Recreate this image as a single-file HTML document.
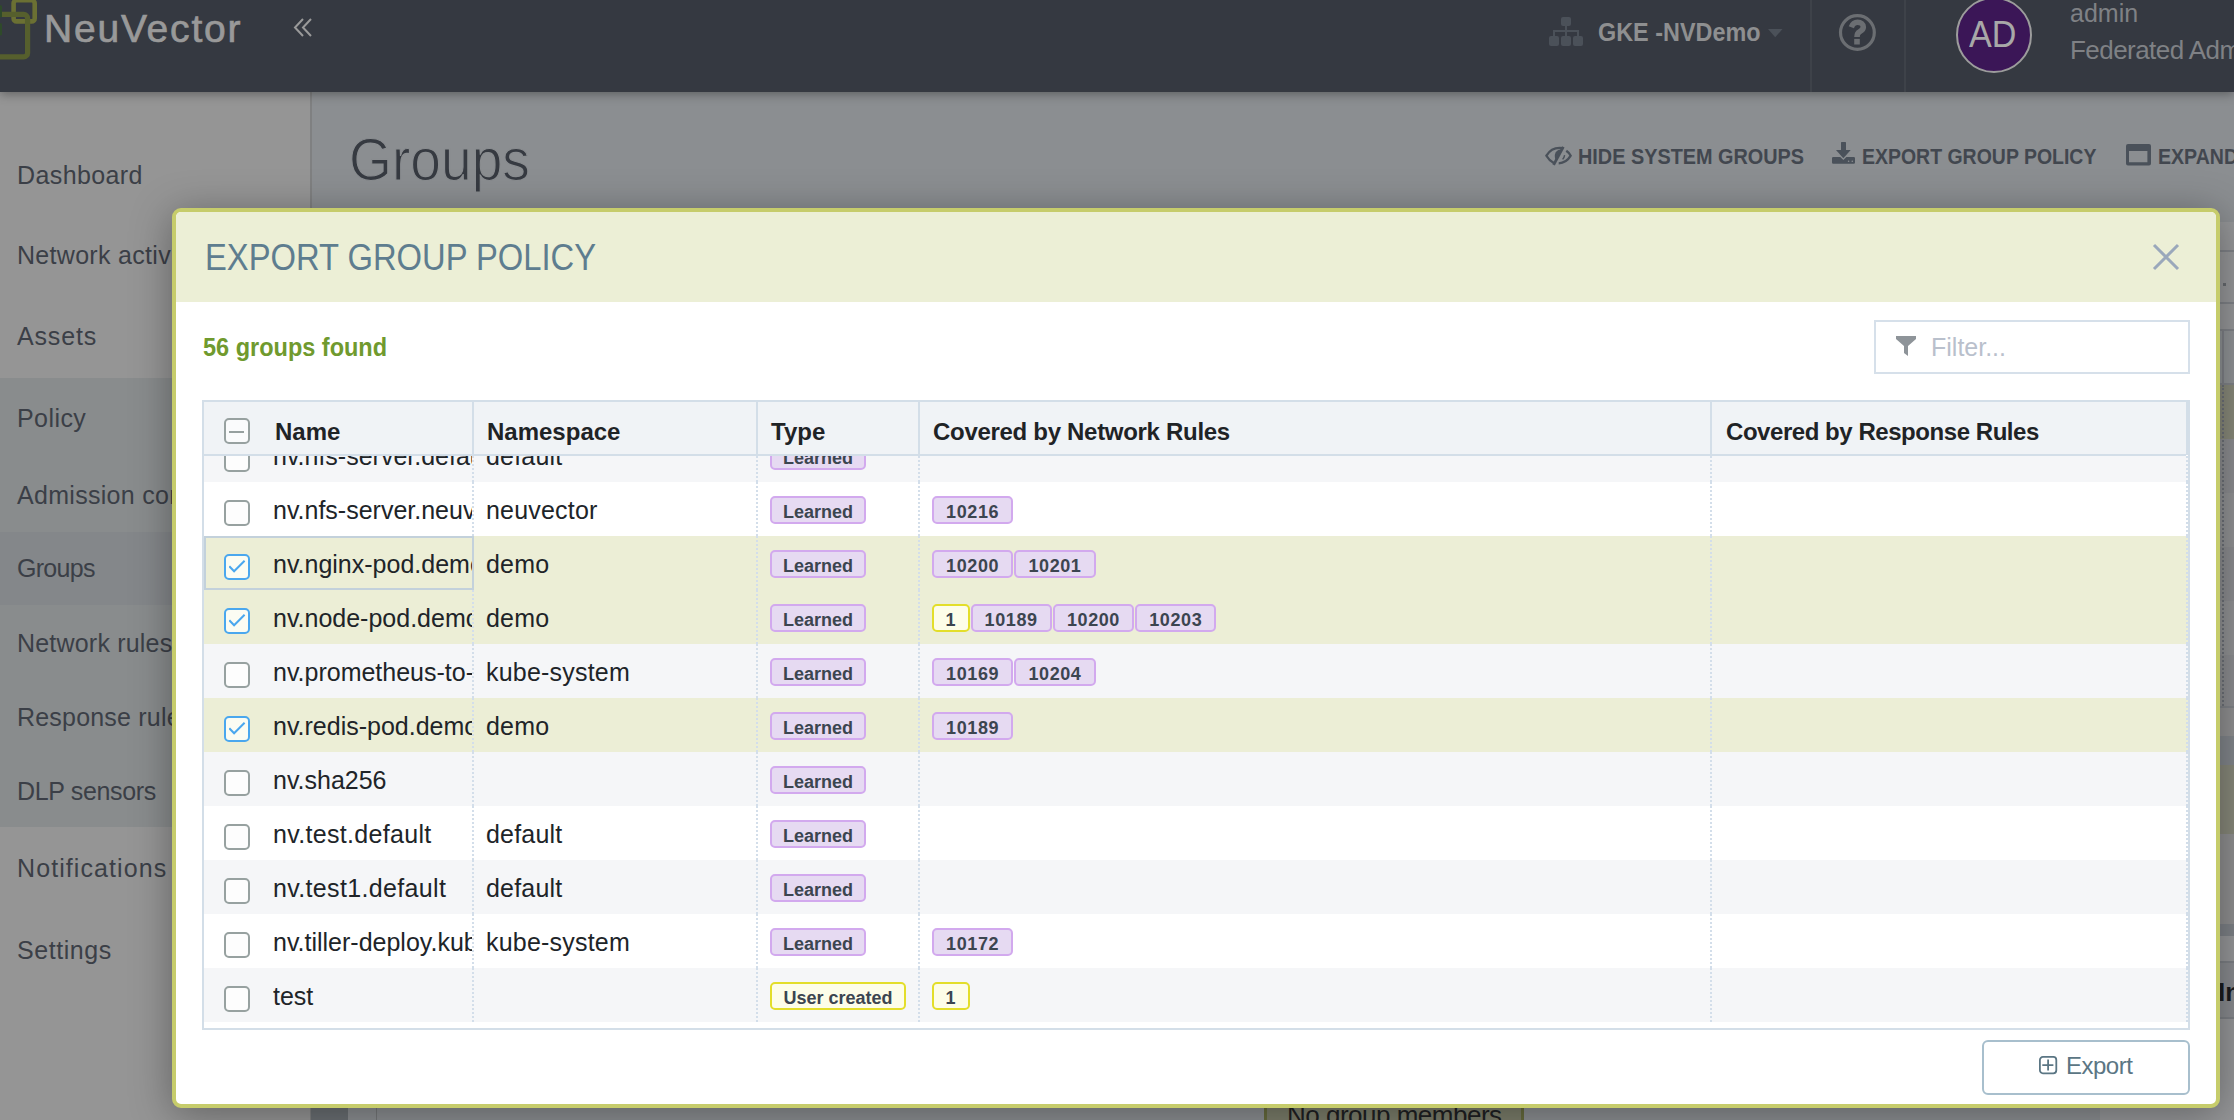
<!DOCTYPE html>
<html><head><meta charset="utf-8">
<style>
*{box-sizing:border-box;margin:0;padding:0}
html,body{width:2234px;height:1120px;overflow:hidden;background:#8b8e91}
body{font-family:"Liberation Sans",sans-serif;position:relative}
.abs{position:absolute}
#hdr{left:0;top:0;width:2234px;height:92px;background:#353941;z-index:5;box-shadow:0 2px 10px rgba(0,0,0,0.35)}
#side{left:0;top:92px;width:310px;height:1028px;background:#959595}
#sideline{left:310px;top:92px;width:2px;height:1028px;background:#7f8081}
#content{left:312px;top:92px;width:1922px;height:1028px;background:#8b8e91}
.nav{position:absolute;left:17px;font-size:25px;color:#3b3f47;letter-spacing:0.45px;white-space:nowrap;line-height:29px}
#modal{left:172px;top:208px;width:2048px;height:900px;border:4px solid #c6cc6b;border-radius:9px;background:#fff;overflow:hidden;box-shadow:0 6px 40px rgba(0,0,0,0.35)}
#mhead{left:0;top:0;width:2040px;height:90px;background:#ecefd6}
.t{position:absolute;white-space:nowrap}
.th{position:absolute;top:3px;height:53px;font-weight:bold;font-size:24px;color:#1f2326;line-height:53px}
.row{position:absolute;left:0;width:1984px;height:54px}
.cell{position:absolute;top:1px;height:53px;line-height:54px;font-size:25px;color:#202428;white-space:nowrap;overflow:hidden;letter-spacing:0.2px}
.cb{position:absolute;left:20px;width:25.6px;height:25.6px;border:2px solid #97a1a0;border-radius:5px;background:#fdfdfd}
.cb.on{border-color:#4aa7ee;background:#fbfcf3}
.tag{position:absolute;height:28px;border:2px solid #d2a9ee;background:#e6daf2;border-radius:5px;font-weight:bold;font-size:18px;color:#3c4550;line-height:29px;text-align:center}
.tag.y{border-color:#e3de2a;background:#fdfde8}
.vd{position:absolute;top:0;width:0;height:54px;border-left:2px dotted #d3deea}
</style></head><body>

<!-- header -->
<div id="hdr" class="abs">
  <svg class="abs" style="left:0;top:0" width="45" height="62" viewBox="0 0 45 62">
    <rect x="13.6" y="0.3" width="21.1" height="21.1" rx="3" fill="none" stroke="#6b7033" stroke-width="4.6"/>
    <rect x="-20" y="14.4" width="47.6" height="42.5" rx="4" fill="none" stroke="#565f2d" stroke-width="5.2"/>
    <rect x="-1" y="5.2" width="3" height="12.2" rx="1.2" fill="#2f4a2a"/>
    <rect x="-1" y="23.2" width="3" height="12.2" rx="1.2" fill="#2f4a2a"/>
  </svg>
  <div class="t" style="left:44px;top:7px;font-size:39px;color:#999999;-webkit-text-stroke:0.7px #999999;letter-spacing:1.8px">NeuVector</div>
  <svg class="abs" style="left:293px;top:18px" width="20" height="20" viewBox="0 0 20 20"><path d="M10 1L2 9.5L10 18M18 1L10 9.5L18 18" fill="none" stroke="#9a9a9a" stroke-width="2"/></svg>

  <svg class="abs" style="left:1549px;top:17px" width="34" height="30" viewBox="0 0 34 30">
    <rect x="12" y="0" width="10" height="9" rx="2" fill="#4b5159"/>
    <rect x="0" y="19" width="10" height="10" rx="2" fill="#4b5159"/>
    <rect x="12" y="19" width="10" height="10" rx="2" fill="#4b5159"/>
    <rect x="24" y="19" width="10" height="10" rx="2" fill="#4b5159"/>
    <rect x="16" y="8" width="2" height="11" fill="#4b5159"/>
    <rect x="4" y="13" width="26" height="2" fill="#4b5159"/>
    <rect x="4" y="13" width="2" height="6" fill="#4b5159"/>
    <rect x="28" y="13" width="2" height="6" fill="#4b5159"/>
  </svg>
  <div class="t" style="left:1598px;top:17px;font-size:26px;font-weight:bold;color:#8e8f90;transform:scaleX(0.9);transform-origin:0 0">GKE -NVDemo</div>
  <svg class="abs" style="left:1768px;top:29px" width="15" height="9"><path d="M0 0H14.5L7.25 8.3Z" fill="#4b5159"/></svg>
  <div class="abs" style="left:1810px;top:0;width:2px;height:92px;background:#3e4249"></div>
  <div class="abs" style="left:1904px;top:0;width:2px;height:92px;background:#3e4249"></div>
  <svg class="abs" style="left:1838px;top:13px" width="39" height="39" viewBox="0 0 39 39">
  <circle cx="19.4" cy="19.5" r="16.9" fill="none" stroke="#6b6e72" stroke-width="3.2"/>
  <path d="M13.3 14.2C14.6 10.8 16.8 9.3 19.6 9.3C22.9 9.3 25.3 11.3 25.3 14C25.3 16.3 23.8 17.5 21.8 18.6C19.9 19.6 19 20.6 19 23.9" fill="none" stroke="#6b6e72" stroke-width="5.6"/>
  <rect x="16.2" y="25.9" width="5.6" height="5.6" fill="#6b6e72"/>
</svg>
  <div class="abs" style="left:1956px;top:-3px;width:76px;height:76px;border-radius:50%;background:#3b1657;border:2px solid #9c9c9c"></div>
  <div class="t" style="left:1969px;top:14px;font-size:37px;color:#a8a8a8;transform:scaleX(0.922);transform-origin:0 0">AD</div>
  <div class="t" style="left:2070px;top:-1px;font-size:25px;color:#7f8185">admin</div>
  <div class="t" style="left:2070px;top:35px;font-size:26px;color:#7f8185;letter-spacing:-0.55px">Federated Admin</div>
</div>

<!-- sidebar -->
<div id="side" class="abs">
  <div class="abs" style="left:0;top:286px;width:310px;height:449px;background:#898c8d"></div>
  <div class="abs" style="left:0;top:440px;width:310px;height:73px;background:#84878a"></div>
</div>
<div class="nav" style="top:161px;letter-spacing:0.4px">Dashboard</div>
<div class="nav" style="top:241px;letter-spacing:0.3px">Network activity</div>
<div class="nav" style="top:322px;letter-spacing:0.85px">Assets</div>
<div class="nav" style="top:404px;letter-spacing:0.43px">Policy</div>
<div class="nav" style="top:481px;letter-spacing:0.3px">Admission control</div>
<div class="nav" style="top:554px;letter-spacing:-0.72px">Groups</div>
<div class="nav" style="top:629px;letter-spacing:0.2px">Network rules</div>
<div class="nav" style="top:703px;letter-spacing:0.2px">Response rules</div>
<div class="nav" style="top:777px;letter-spacing:-0.35px">DLP sensors</div>
<div class="nav" style="top:854px;letter-spacing:1.09px">Notifications</div>
<div class="nav" style="top:936px;letter-spacing:0.55px">Settings</div>
<div id="sideline" class="abs"></div>

<!-- content -->
<div class="t" style="left:349px;top:126px;font-size:59px;color:#363a41;-webkit-text-stroke:1.2px #8a8d90;transform:scaleX(0.935);transform-origin:0 0">Groups</div>
<svg class="abs" style="left:1545px;top:146px" width="27" height="20" viewBox="0 0 27 20">
  <path d="M17.5 2.1C10.5 1.2 4.5 4.5 1.4 9.7C3.3 13 5.8 15.4 8.8 17" fill="none" stroke="#4a515a" stroke-width="2.3"/>
  <path d="M18.3 0.9L8.6 18.9" stroke="#4a515a" stroke-width="2.8"/>
  <path d="M16.8 3.2C12.3 3.2 9.8 6.5 9.8 9.8C9.8 11.8 10.3 13.4 11 14.6Z" fill="#4a515a"/>
  <path d="M21.3 4.8C23.3 6.2 24.8 7.9 25.7 9.7C23 14.2 18.5 17.2 13.7 17.4" fill="none" stroke="#4a515a" stroke-width="2.3"/>
  <path d="M19.6 9.1C19.4 10.7 18.7 12.2 17.6 13.4" fill="none" stroke="#4a515a" stroke-width="1.4"/>
</svg>
<div class="t" style="left:1578px;top:144px;font-size:22px;font-weight:bold;color:#42474f;transform:scaleX(0.902);transform-origin:0 0">HIDE SYSTEM GROUPS</div>
<svg class="abs" style="left:1832px;top:142px" width="23" height="22" viewBox="0 0 23 22">
  <rect x="9" y="0" width="5" height="8.5" rx="0.6" fill="#4a515a"/>
  <path d="M4 8H18.7L11.35 16.2Z" fill="#4a515a"/>
  <path d="M0 16.2Q0 15 1.2 15H8.3L11.35 18.1L14.4 15H21.8Q23 15 23 16.2V20.6Q23 21.8 21.8 21.8H1.2Q0 21.8 0 20.6Z" fill="#4a515a"/>
  <circle cx="16.6" cy="19.2" r="0.8" fill="#8c8f92"/><circle cx="20.3" cy="19.2" r="0.8" fill="#8c8f92"/>
</svg>
<div class="t" style="left:1862px;top:144px;font-size:22px;font-weight:bold;color:#42474f;transform:scaleX(0.885);transform-origin:0 0">EXPORT GROUP POLICY</div>
<svg class="abs" style="left:2126px;top:144px" width="25" height="22" viewBox="0 0 25 22">
  <path d="M2 0H23Q25 0 25 2V19.6Q25 21.6 23 21.6H2Q0 21.6 0 19.6V2Q0 0 2 0ZM3 7V18.2H21.4V7Z" fill="#4a515a" fill-rule="evenodd"/>
</svg>
<div class="t" style="left:2158px;top:144px;font-size:22px;font-weight:bold;color:#42474f;transform:scaleX(0.89);transform-origin:0 0">EXPAND</div>


<!-- background page pieces (visible around modal) -->
<div class="abs" style="left:2100px;top:222px;width:134px;height:898px;background:#959698"></div>
<div class="abs" style="left:2100px;top:250px;width:134px;height:2px;background:#7f8287"></div>
<div class="abs" style="left:2223px;top:283px;width:3px;height:3px;background:#676a6f"></div>
<div class="abs" style="left:2100px;top:302px;width:134px;height:2px;background:#7f8287"></div>
<div class="abs" style="left:2100px;top:329px;width:134px;height:2px;background:#7f8287"></div>
<div class="abs" style="left:2100px;top:331px;width:134px;height:54px;background:#8f9295"></div>
<div class="abs" style="left:2222px;top:331px;width:2px;height:54px;background:#7e8186"></div>
<div class="abs" style="left:2100px;top:383px;width:134px;height:2px;background:#7f8287"></div>
<div class="abs" style="left:2100px;top:385px;width:134px;height:54px;background:#878879"></div>
<div class="abs" style="left:2100px;top:439px;width:134px;height:54px;background:#8b8c8f"></div>
<div class="abs" style="left:2100px;top:493px;width:134px;height:54px;background:#909193"></div>
<div class="abs" style="left:2100px;top:547px;width:134px;height:54px;background:#8b8c8f"></div>
<div class="abs" style="left:2100px;top:601px;width:134px;height:54px;background:#909193"></div>
<div class="abs" style="left:2100px;top:655px;width:134px;height:51px;background:#8b8c8f"></div>
<div class="abs" style="left:2222px;top:385px;width:0;height:321px;border-left:2px dotted #6c7077"></div>
<div class="abs" style="left:2100px;top:706px;width:134px;height:2px;background:#7f8287"></div>
<div class="abs" style="left:2100px;top:708px;width:134px;height:28px;background:#8f8f90"></div>
<div class="abs" style="left:2100px;top:736px;width:134px;height:29px;background:#81858a"></div>
<div class="abs" style="left:2100px;top:765px;width:134px;height:69px;background:#868779"></div>
<div class="abs" style="left:2100px;top:834px;width:134px;height:90px;background:#8e8e8f"></div>
<div class="abs" style="left:2100px;top:924px;width:134px;height:12px;background:#7d8186"></div>
<div class="abs" style="left:2100px;top:961px;width:134px;height:2px;background:#7c7f84"></div>
<div class="abs" style="left:2100px;top:963px;width:134px;height:54px;background:#888a8e"></div>
<div class="abs" style="left:2100px;top:1017px;width:134px;height:2px;background:#7c7f84"></div>
<div class="t" style="left:2218px;top:977px;font-size:26px;font-weight:bold;color:#1a1c1f">In</div>
<div class="abs" style="left:311px;top:1060px;width:37px;height:60px;background:#6a6f73"></div>
<div class="abs" style="left:376px;top:1060px;width:1px;height:60px;background:#757779"></div>
<div class="abs" style="left:1264px;top:1090px;width:260px;height:40px;background:#7b7d6a;border:3px solid #676b3d"></div>
<div class="t" style="left:1287px;top:1100px;font-size:26px;color:#1e2022;letter-spacing:-0.5px">No group members</div>
<!-- modal -->
<div id="modal" class="abs">
  <div id="mhead" class="abs"></div>
  <div class="t" style="left:28.5px;top:25px;font-size:36px;color:#5e7d8f;transform:scaleX(0.909);transform-origin:0 0">EXPORT GROUP POLICY</div>
  <svg class="abs" style="left:1976px;top:31px" width="28" height="28" viewBox="0 0 28 28">
    <path d="M2 2L26 26M26 2L2 26" stroke="#9aa8bb" stroke-width="3"/>
  </svg>
  <div class="t" style="left:27px;top:121px;font-size:25px;font-weight:bold;color:#709a2e;transform:scaleX(0.94);transform-origin:0 0">56 groups found</div>
  <div class="abs" style="left:1698px;top:108px;width:316px;height:54px;border:2px solid #d6e0ea"></div>
  <svg class="abs" style="left:1720px;top:124px" width="20" height="21" viewBox="0 0 20 21"><path d="M0 0H20V3L12 10V20L8 17V10L0 3Z" fill="#8e9499"/></svg>
  <div class="t" style="left:1755px;top:121px;font-size:25px;color:#b9c0cc">Filter...</div>

  <!-- table -->
  <div id="tbl" class="abs" style="left:26px;top:188px;width:1988px;height:630px;border:2px solid #d3dee8;background:#fff">
    <div id="tbody" class="abs" style="left:0;top:54px;width:1984px;height:567px;overflow:hidden">
      <div class="row" style="top:-28px;background:#f5f6f8"><div class="cb" style="top:18px;left:20px"></div><div class="cell" style="left:69px;width:199px;letter-spacing:0px">nv.nfs-server.default</div><div class="cell" style="left:282px;width:270px">default</div><div class="tag" style="left:566px;top:14px;width:96px">Learned</div><div class="vd" style="left:268px"></div><div class="vd" style="left:552px"></div><div class="vd" style="left:714px"></div><div class="vd" style="left:1506px"></div><div class="vd" style="left:1982px"></div></div>
<div class="row" style="top:26px;background:#ffffff"><div class="cb" style="top:18px;left:20px"></div><div class="cell" style="left:69px;width:199px;letter-spacing:0px">nv.nfs-server.neuvector</div><div class="cell" style="left:282px;width:270px">neuvector</div><div class="tag" style="left:566px;top:14px;width:96px">Learned</div><div class="tag" style="left:728px;top:14px;width:81.3px;letter-spacing:0.6px">10216</div><div class="vd" style="left:268px"></div><div class="vd" style="left:552px"></div><div class="vd" style="left:714px"></div><div class="vd" style="left:1506px"></div><div class="vd" style="left:1982px"></div></div>
<div class="row" style="top:80px;background:#eceed6"><div class="cb on" style="top:18px;left:20px"><svg class="abs" style="left:3px;top:4px" width="17" height="14" viewBox="0 0 17 14"><path d="M0.3 6.3L5.1 11.3L15.6 0.8" fill="none" stroke="#4aa7ee" stroke-width="2"/></svg></div><div class="cell" style="left:69px;width:199px;letter-spacing:0px">nv.nginx-pod.demo</div><div class="cell" style="left:282px;width:270px">demo</div><div class="tag" style="left:566px;top:14px;width:96px">Learned</div><div class="tag" style="left:728px;top:14px;width:81.3px;letter-spacing:0.6px">10200</div><div class="tag" style="left:810.3px;top:14px;width:81.3px;letter-spacing:0.6px">10201</div><div class="vd" style="left:268px"></div><div class="vd" style="left:552px"></div><div class="vd" style="left:714px"></div><div class="vd" style="left:1506px"></div><div class="vd" style="left:1982px"></div><div class="abs" style="left:0;top:0;width:270px;height:54px;border:2px solid #c3d1db"></div></div>
<div class="row" style="top:134px;background:#eceed6"><div class="cb on" style="top:18px;left:20px"><svg class="abs" style="left:3px;top:4px" width="17" height="14" viewBox="0 0 17 14"><path d="M0.3 6.3L5.1 11.3L15.6 0.8" fill="none" stroke="#4aa7ee" stroke-width="2"/></svg></div><div class="cell" style="left:69px;width:199px;letter-spacing:0px">nv.node-pod.demo</div><div class="cell" style="left:282px;width:270px">demo</div><div class="tag" style="left:566px;top:14px;width:96px">Learned</div><div class="tag y" style="left:728px;top:14px;width:37.5px;letter-spacing:0.6px">1</div><div class="tag" style="left:766.5px;top:14px;width:81.3px;letter-spacing:0.6px">10189</div><div class="tag" style="left:848.8px;top:14px;width:81.3px;letter-spacing:0.6px">10200</div><div class="tag" style="left:931.0999999999999px;top:14px;width:81.3px;letter-spacing:0.6px">10203</div><div class="vd" style="left:268px"></div><div class="vd" style="left:552px"></div><div class="vd" style="left:714px"></div><div class="vd" style="left:1506px"></div><div class="vd" style="left:1982px"></div></div>
<div class="row" style="top:188px;background:#f5f6f8"><div class="cb" style="top:18px;left:20px"></div><div class="cell" style="left:69px;width:199px;letter-spacing:0px">nv.prometheus-to-sd.kube-system</div><div class="cell" style="left:282px;width:270px">kube-system</div><div class="tag" style="left:566px;top:14px;width:96px">Learned</div><div class="tag" style="left:728px;top:14px;width:81.3px;letter-spacing:0.6px">10169</div><div class="tag" style="left:810.3px;top:14px;width:81.3px;letter-spacing:0.6px">10204</div><div class="vd" style="left:268px"></div><div class="vd" style="left:552px"></div><div class="vd" style="left:714px"></div><div class="vd" style="left:1506px"></div><div class="vd" style="left:1982px"></div></div>
<div class="row" style="top:242px;background:#eceed6"><div class="cb on" style="top:18px;left:20px"><svg class="abs" style="left:3px;top:4px" width="17" height="14" viewBox="0 0 17 14"><path d="M0.3 6.3L5.1 11.3L15.6 0.8" fill="none" stroke="#4aa7ee" stroke-width="2"/></svg></div><div class="cell" style="left:69px;width:199px;letter-spacing:0px">nv.redis-pod.demo</div><div class="cell" style="left:282px;width:270px">demo</div><div class="tag" style="left:566px;top:14px;width:96px">Learned</div><div class="tag" style="left:728px;top:14px;width:81.3px;letter-spacing:0.6px">10189</div><div class="vd" style="left:268px"></div><div class="vd" style="left:552px"></div><div class="vd" style="left:714px"></div><div class="vd" style="left:1506px"></div><div class="vd" style="left:1982px"></div></div>
<div class="row" style="top:296px;background:#f5f6f8"><div class="cb" style="top:18px;left:20px"></div><div class="cell" style="left:69px;width:199px;letter-spacing:0px">nv.sha256</div><div class="cell" style="left:282px;width:270px"></div><div class="tag" style="left:566px;top:14px;width:96px">Learned</div><div class="vd" style="left:268px"></div><div class="vd" style="left:552px"></div><div class="vd" style="left:714px"></div><div class="vd" style="left:1506px"></div><div class="vd" style="left:1982px"></div></div>
<div class="row" style="top:350px;background:#ffffff"><div class="cb" style="top:18px;left:20px"></div><div class="cell" style="left:69px;width:199px;letter-spacing:0.32px">nv.test.default</div><div class="cell" style="left:282px;width:270px">default</div><div class="tag" style="left:566px;top:14px;width:96px">Learned</div><div class="vd" style="left:268px"></div><div class="vd" style="left:552px"></div><div class="vd" style="left:714px"></div><div class="vd" style="left:1506px"></div><div class="vd" style="left:1982px"></div></div>
<div class="row" style="top:404px;background:#f5f6f8"><div class="cb" style="top:18px;left:20px"></div><div class="cell" style="left:69px;width:199px;letter-spacing:0.35px">nv.test1.default</div><div class="cell" style="left:282px;width:270px">default</div><div class="tag" style="left:566px;top:14px;width:96px">Learned</div><div class="vd" style="left:268px"></div><div class="vd" style="left:552px"></div><div class="vd" style="left:714px"></div><div class="vd" style="left:1506px"></div><div class="vd" style="left:1982px"></div></div>
<div class="row" style="top:458px;background:#ffffff"><div class="cb" style="top:18px;left:20px"></div><div class="cell" style="left:69px;width:199px;letter-spacing:0px">nv.tiller-deploy.kube-system</div><div class="cell" style="left:282px;width:270px">kube-system</div><div class="tag" style="left:566px;top:14px;width:96px">Learned</div><div class="tag" style="left:728px;top:14px;width:81.3px;letter-spacing:0.6px">10172</div><div class="vd" style="left:268px"></div><div class="vd" style="left:552px"></div><div class="vd" style="left:714px"></div><div class="vd" style="left:1506px"></div><div class="vd" style="left:1982px"></div></div>
<div class="row" style="top:512px;background:#f5f6f8"><div class="cb" style="top:18px;left:20px"></div><div class="cell" style="left:69px;width:199px;letter-spacing:0px">test</div><div class="cell" style="left:282px;width:270px"></div><div class="tag y" style="left:566px;top:14px;width:136px">User created</div><div class="tag y" style="left:728px;top:14px;width:37.5px;letter-spacing:0.6px">1</div><div class="vd" style="left:268px"></div><div class="vd" style="left:552px"></div><div class="vd" style="left:714px"></div><div class="vd" style="left:1506px"></div><div class="vd" style="left:1982px"></div></div>
    </div>
    <div class="abs" style="left:0;top:0;width:1982px;height:54px;background:#f0f3f6;border-bottom:2px solid #d3dee8"></div>
    <div class="abs" style="left:268px;top:0;width:2px;height:53px;background:#d3dee8"></div>
    <div class="abs" style="left:552px;top:0;width:2px;height:53px;background:#d3dee8"></div>
    <div class="abs" style="left:714px;top:0;width:2px;height:53px;background:#d3dee8"></div>
    <div class="abs" style="left:1506px;top:0;width:2px;height:53px;background:#d3dee8"></div>
    <div class="abs" style="left:1982px;top:0;width:2px;height:53px;background:#d3dee8"></div>
    <div class="cb" style="top:16px;left:20px;background:#fafbfc"><div class="abs" style="left:3.1px;top:10.9px;width:15.2px;height:2px;background:#96a09f"></div></div>
    <div class="th" style="left:71px">Name</div>
    <div class="th" style="left:283px">Namespace</div>
    <div class="th" style="left:567px">Type</div>
    <div class="th" style="left:729px;letter-spacing:-0.3px">Covered by Network Rules</div>
    <div class="th" style="left:1522px;letter-spacing:-0.45px">Covered by Response Rules</div>
  </div>

  <div class="abs" style="left:1806px;top:828px;width:208px;height:55px;border:2px solid #a8bfcd;border-radius:6px"></div>
  <svg class="abs" style="left:1863px;top:843.5px" width="19" height="19" viewBox="0 0 19 19">
    <rect x="0.9" y="0.9" width="16.4" height="16.4" rx="3" fill="none" stroke="#5b7684" stroke-width="1.8"/>
    <path d="M9.1 3.5V14.4M3.3 9.1H14.4" stroke="#5b7684" stroke-width="1.8"/>
  </svg>
  <div class="t" style="left:1890px;top:840px;font-size:24px;color:#5b7684;letter-spacing:-0.5px">Export</div>
</div>
</body></html>
